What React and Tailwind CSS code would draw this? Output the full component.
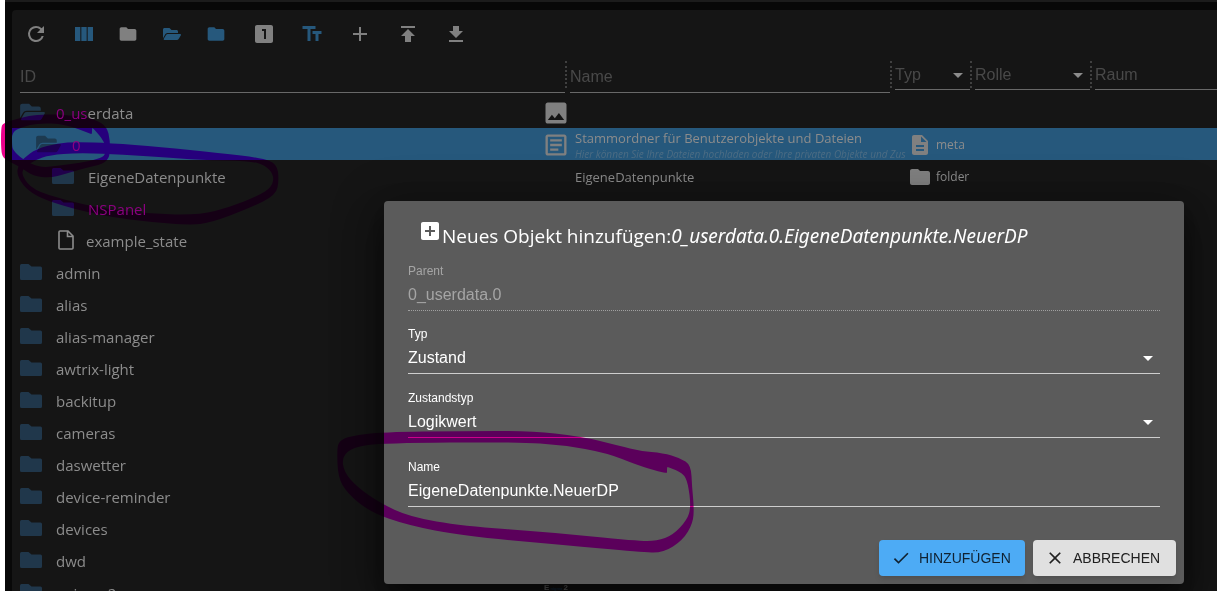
import { useState } from "react";

const ICONS = {
  refresh:
    "M17.65 6.35A7.958 7.958 0 0 0 12 4a8 8 0 1 0 7.73 10h-2.08A6 6 0 1 1 12 6c1.66 0 3.14.69 4.22 1.78L13 11h7V4l-2.35 2.35z",
  columns: "M14.67 5v14H9.33V5h5.34zm1 14H21V5h-5.33v14zm-7.34 0V5H3v14h5.33z",
  folder: "M10 4H4c-1.1 0-1.99.9-1.99 2L2 18c0 1.1.9 2 2 2h16c1.1 0 2-.9 2-2V8c0-1.1-.9-2-2-2h-8l-2-2z",
  one: "M19 3H5c-1.1 0-2 .9-2 2v14c0 1.1.9 2 2 2h14c1.1 0 2-.9 2-2V5c0-1.1-.9-2-2-2zm-5 14h-2V9h-2V7h4v10z",
  text: "M2.5 4v3h5v12h3V7h5V4h-13zm19 5h-9v3h3v7h3v-7h3V9z",
  add: "M19 13h-6v6h-2v-6H5v-2h6V5h2v6h6v2z",
  upload: "M5 4v2h14V4H5zm0 10h4v6h6v-6h4l-7-7-7 7z",
  download: "M19 9h-4V4H9v5H5l7 7 7-7zM5 18v2h14v-2H5z",
  image:
    "M21 19V5c0-1.1-.9-2-2-2H5c-1.1 0-2 .9-2 2v14c0 1.1.9 2 2 2h14c1.1 0 2-.9 2-2zM8.5 13.5l2.5 3.01L14.5 12l4.5 6H5l3.5-4.5z",
  article:
    "M19 5v14H5V5h14m0-2H5c-1.1 0-2 .9-2 2v14c0 1.1.9 2 2 2h14c1.1 0 2-.9 2-2V5c0-1.1-.9-2-2-2zM14 17H7v-2h7v2zm3-4H7v-2h10v2zm0-4H7V7h10v2z",
  doc: "M14 2H6c-1.1 0-2 .9-2 2v16c0 1.1.9 2 2 2h12c1.1 0 2-.9 2-2V8l-6-6zm2 16H8v-2h8v2zm0-4H8v-2h8v2zm-3-5V3.5L18.5 9H13z",
  addBox: "M19 3H5c-1.11 0-2 .9-2 2v14c0 1.1.89 2 2 2h14c1.1 0 2-.9 2-2V5c0-1.1-.9-2-2-2zm-2 10h-4v4h-2v-4H7v-2h4V7h2v4h4v2z",
  check: "M9 16.17 4.83 12l-1.42 1.41L9 19 21 7l-1.41-1.41z",
  close: "M19 6.41 17.59 5 12 10.59 6.41 5 5 6.41 10.59 12 5 17.59 6.41 19 12 13.41 17.59 19 19 17.59 13.41 12z",
};

function Icon({ name, className = "size-6" }) {
  return (
    <svg viewBox="0 0 24 24" fill="currentColor" className={`shrink-0 ${className}`} aria-hidden="true">
      <path d={ICONS[name]} />
    </svg>
  );
}

function OpenFolder({ className }) {
  return (
    <svg viewBox="0 0 576 512" fill="currentColor" className={`shrink-0 ${className}`} aria-hidden="true">
      <path d="M572.7 292.1 500.3 416.2A64 64 0 0 1 445 448H45c-18.5 0-30.1-20.1-20.7-36.1l72.4-124.1A64 64 0 0 1 152 256h400c18.5 0 30.1 20.1 20.7 36.1zM152 224h328v-48c0-26.5-21.5-48-48-48H272l-64-64H48C21.5 64 0 85.5 0 112v278l69.1-118.4C86.2 242.2 118 224 152 224z" />
    </svg>
  );
}

function TreeFolder() {
  return (
    <svg viewBox="0 0 22 16" fill="currentColor" className="h-4 w-[22px] shrink-0" aria-hidden="true">
      <path d="M1.5 0h7l3 2.500h9A1.5 1.5 0 0 1 22 4v10.500a1.5 1.5 0 0 1-1.5 1.500h-19A1.5 1.5 0 0 1 0 14.500v-13A1.5 1.5 0 0 1 1.500 0z" />
    </svg>
  );
}

function StateFile() {
  return (
    <svg viewBox="0 0 16 20" fill="none" stroke="currentColor" strokeWidth="1.6" className="h-5 w-4 shrink-0" aria-hidden="true">
      <path d="M2 1h8l5 5v12a1 1 0 0 1-1 1H2a1 1 0 0 1-1-1V2a1 1 0 0 1 1-1zM9.5 1v5.5H15" />
    </svg>
  );
}

function Caret({ className }) {
  return (
    <svg viewBox="0 0 10 5" fill="currentColor" className={`pointer-events-none absolute h-[5px] w-[10px] ${className}`} aria-hidden="true">
      <path d="M0 0h10L5 5z" />
    </svg>
  );
}

const TOOLS = [
  { label: "Aktualisieren", icon: "refresh", box: "w-12" },
  { label: "Spalten", icon: "columns", box: "w-12 text-[#26587c]" },
  { label: "Alle zuklappen", icon: "folder", box: "w-10", size: "size-5" },
  { label: "Alle aufklappen", box: "w-12 text-[#26587c]" },
  { label: "Eine Ebene zuklappen", icon: "folder", box: "w-10 text-[#26587c]", size: "size-5" },
  { label: "Eine Ebene", icon: "one", box: "w-14" },
  { label: "Namen anzeigen", icon: "text", box: "w-10 text-[#26587c]" },
  { label: "Objekt hinzufügen", icon: "add", box: "w-14" },
  { label: "Objekte hochladen", icon: "upload", box: "w-10" },
  { label: "Objekte herunterladen", icon: "download", box: "w-14" },
];

function Toolbar() {
  return (
    <div className="flex h-12 items-center text-[#808080]">
      {TOOLS.map((t) => (
        <button key={t.label} type="button" aria-label={t.label} className={`flex h-10 items-center justify-center ${t.box}`}>
          {t.icon ? <Icon name={t.icon} className={t.size} /> : <OpenFolder className="h-4 w-[18px]" />}
        </button>
      ))}
    </div>
  );
}

function FilterText({ label, className }) {
  return (
    <input
      type="text"
      aria-label={label}
      placeholder={label}
      className={`h-8 min-w-0 border-b border-[#686868] bg-transparent placeholder:text-[#494949] focus:outline-none ${className}`}
    />
  );
}

function FilterSelect({ label, className }) {
  return (
    <div className={`relative shrink-0 ${className}`}>
      <select aria-label={label} className="h-[29px] w-full appearance-none border-b border-[#686868] bg-transparent text-[#494949] focus:outline-none">
        <option>{label}</option>
      </select>
      <Caret className="top-3 right-[7px] text-[#8c8c8c]" />
    </div>
  );
}

function Divider() {
  return <div className="h-[27px] w-[5px] shrink-0 border-l-2 border-dotted border-[#404040]" />;
}

function Filters() {
  return (
    <div className="flex h-[38px] items-start overflow-hidden pt-[3px] pl-2 font-['Liberation_Sans',Arial,sans-serif] text-base">
      <FilterText label="ID" className="w-[545px] shrink-0" />
      <Divider />
      <FilterText label="Name" className="w-[320px] shrink-0" />
      <Divider />
      <FilterSelect label="Typ" className="w-[75px]" />
      <Divider />
      <FilterSelect label="Rolle" className="w-[115px]" />
      <Divider />
      <FilterSelect label="Raum" className="w-[175px]" />
    </div>
  );
}

const ROWS = [
  { id: "0_userdata", marked: "0_us", rest: "erdata", icon: "open", pad: "pl-2", badge: "image" },
  {
    id: "0",
    marked: "0",
    icon: "open",
    pad: "pl-6",
    selected: true,
    badge: "article",
    name: "Stammordner für Benutzerobjekte und Dateien",
    desc: "Hier können Sie Ihre Dateien hochladen oder Ihre privaten Objekte und Zus",
    type: "meta",
    typeIcon: "doc",
  },
  { id: "EigeneDatenpunkte", icon: "closed", pad: "pl-10", name: "EigeneDatenpunkte", type: "folder", typeIcon: "folder" },
  { id: "NSPanel", marked: "NSPanel", icon: "closed", pad: "pl-10" },
  { id: "example_state", icon: "state", pad: "pl-[46px]" },
  { id: "admin" },
  { id: "alias" },
  { id: "alias-manager" },
  { id: "awtrix-light" },
  { id: "backitup" },
  { id: "cameras" },
  { id: "daswetter" },
  { id: "device-reminder" },
  { id: "devices" },
  { id: "dwd" },
  { id: "enigma2", badge: "enigma" },
];

function RowIcon({ kind, selected }) {
  if (kind === "state") {
    return (
      <span className="w-7 pb-0.5 text-[#8c8c8c]">
        <StateFile />
      </span>
    );
  }
  return (
    <span className={`w-9 pb-0.5 ${selected ? "text-[#1d3a50]" : "text-[#20374b]"}`}>
      {kind === "open" ? <OpenFolder className="h-[22px] w-[25px]" /> : <TreeFolder />}
    </span>
  );
}

function Badge({ kind }) {
  if (!kind) return null;
  if (kind === "enigma") {
    return (
      <span className="flex w-7 items-baseline justify-between self-start px-0.5 font-['Liberation_Sans',Arial,sans-serif] text-[8px] leading-5 font-bold text-[#707070]">
        E<span className="text-[4px] text-[#16324a]">nigma</span>2
      </span>
    );
  }
  return <Icon name={kind} className="size-7 text-[#808080]" />;
}

function ObjectTable() {
  return (
    <table className="w-full table-fixed text-left text-[#8c8c8c]">
      <colgroup>
        <col className="w-[558px]" />
        <col className="w-[338px]" />
        <col />
      </colgroup>
      <tbody>
        {ROWS.map((r) => (
          <tr key={r.id} className={`h-8 ${r.selected ? "bg-[#26587c]" : ""}`}>
            <td className={`p-0 ${r.pad || "pl-2"}`}>
              <div className="flex h-8 items-center pt-0.5">
                <RowIcon kind={r.icon} selected={r.selected} />
                <span className="flex-1 text-[15px] leading-6">
                  {r.marked && <span className="text-[#8c0080]">{r.marked}</span>}
                  {r.marked ? r.rest : r.id}
                </span>
                <Badge kind={r.badge} />
              </div>
            </td>
            <td className="p-0 pl-[5px]">
              <div className={`flex h-8 flex-col justify-center overflow-hidden text-[13px] leading-5 whitespace-nowrap ${r.desc ? "" : "pt-0.5"}`}>
                <span>{r.name}</span>
                {r.desc && <span className="text-[10px] leading-3 text-[#4d6d84] italic">{r.desc}</span>}
              </div>
            </td>
            <td className="p-0">
              {r.type && (
                <div className="flex h-8 items-center gap-1 pt-0.5 text-xs">
                  <Icon name={r.typeIcon} className="size-6 text-[#808080]" />
                  {r.type}
                </div>
              )}
            </td>
          </tr>
        ))}
      </tbody>
    </table>
  );
}

function Field({ id, label, children, disabled }) {
  return (
    <div className={`relative flex flex-col ${disabled ? "text-[#a5a5a5]" : "text-white"}`}>
      <label htmlFor={id} className="text-xs leading-4">
        {label}
      </label>
      {children}
    </div>
  );
}

const FIELD = "h-8 w-full appearance-none border-b bg-transparent text-base focus:outline-none";

function AddDialog() {
  const [name, setName] = useState("EigeneDatenpunkte.NeuerDP");

  return (
    <div className="absolute inset-0 flex items-end justify-end pr-[33px] pb-[7px]">
      <div
        role="dialog"
        aria-labelledby="dialog-title"
        className="w-[800px] rounded bg-[#5b5b5b] shadow-[0_11px_15px_-7px_rgba(0,0,0,0.4),0_24px_38px_3px_rgba(0,0,0,0.3),0_9px_46px_8px_rgba(0,0,0,0.3)]"
      >
        <h2 id="dialog-title" className="flex h-[62px] items-start pt-[18px] pl-[34px] text-[19px] leading-[34px] text-white">
          <Icon name="addBox" />
          <span>
            Neues Objekt hinzufügen:<i className="font-['Noto_Sans',sans-serif]">0_userdata.0.EigeneDatenpunkte.NeuerDP</i>
          </span>
        </h2>
        <form className="flex flex-col px-6 font-['Liberation_Sans',Arial,sans-serif]" onSubmit={(e) => e.preventDefault()}>
          <Field id="parent" label="Parent" disabled>
            <input id="parent" disabled defaultValue="0_userdata.0" className={`${FIELD} border-dotted border-[#a0a0a0]`} />
          </Field>
          <div className="mt-[15px]">
            <Field id="typ" label="Typ">
              <select id="typ" className={`${FIELD} border-[#cecece]`}>
                <option>Zustand</option>
              </select>
              <Caret className="right-[7px] bottom-[13px]" />
            </Field>
          </div>
          <div className="mt-4">
            <Field id="zustandstyp" label="Zustandstyp">
              <select id="zustandstyp" className={`${FIELD} border-[#cecece]`}>
                <option>Logikwert</option>
              </select>
              <Caret className="right-[7px] bottom-[13px]" />
            </Field>
          </div>
          <div className="mt-[21px]">
            <Field id="name" label="Name">
              <input id="name" value={name} onChange={(e) => setName(e.target.value)} className={`${FIELD} border-[#cecece]`} />
            </Field>
          </div>
        </form>
        <div className="mt-[33px] flex justify-end gap-2 p-2 pt-0 font-['Liberation_Sans',Arial,sans-serif] text-sm">
          <button type="button" className="flex h-9 w-[146px] items-center gap-2 rounded bg-[#4dabf5] pl-3 text-[#102231] shadow-md">
            <Icon name="check" className="size-5" />
            HINZUFÜGEN
          </button>
          <button type="button" className="flex h-9 w-[143px] items-center gap-2 rounded bg-[#e0e0e0] pl-3 text-[#202020] shadow-md">
            <Icon name="close" className="size-5" />
            ABBRECHEN
          </button>
        </div>
      </div>
    </div>
  );
}

// closed curve through the midpoints of the given points
function loop(points) {
  const mid = (a, b) => `${(a[0] + b[0]) / 2} ${(a[1] + b[1]) / 2}`;
  const last = points[points.length - 1];
  const curves = points.map((p, i) => `Q${p[0]} ${p[1]} ${mid(p, points[(i + 1) % points.length])}`);
  return `M${mid(last, points[0])}${curves.join("")}Z`;
}

// outer edge and inner edge of every pen stroke
const STROKES = [
  [
    [[1, 128], [3, 123], [20, 118], [38, 114], [70, 115], [95, 119], [107, 127], [110, 140], [110, 157], [103, 164], [85, 168], [65, 174], [50, 178], [33, 176], [22, 168], [12, 163], [3, 158], [1, 150]],
    [[12, 145], [12, 132], [22, 127], [38, 123], [65, 124], [91, 134], [92, 134], [92, 128], [93, 128], [105, 142], [106, 155], [98, 159], [80, 163], [62, 165], [40, 168], [22, 159], [13, 150]],
  ],
  [
    [[17, 175], [18, 165], [24, 158], [36, 149], [58, 143], [77, 142], [110, 143], [160, 147], [220, 153], [262, 158], [277, 164], [279, 180], [276, 195], [250, 208], [210, 223], [190, 225], [150, 222], [110, 217], [70, 208], [40, 198], [25, 188]],
    [[22, 176], [33, 190], [65, 200], [100, 208], [150, 214], [200, 215], [230, 207], [258, 196], [272, 187], [274, 175], [265, 165], [250, 161], [200, 160], [160, 157], [110, 154], [77, 153], [50, 155], [35, 160], [23, 168]],
  ],
  [
    [[337, 450], [339, 441], [350, 436], [383, 432], [463, 431], [530, 431], [580, 436], [620, 446], [640, 451], [663, 453], [680, 458], [691, 465], [692, 487], [694, 507], [693, 523], [683, 540], [663, 553], [640, 552], [563, 545], [463, 536], [407, 525], [370, 512], [347, 493], [338, 477]],
    [[342, 457], [353, 447], [383, 443], [517, 442], [563, 445], [607, 453], [637, 465], [660, 472], [667, 473], [667, 472], [667, 467], [668, 467], [683, 473], [688, 483], [691, 507], [687, 520], [673, 535], [657, 541], [637, 541], [547, 532], [463, 526], [410, 517], [380, 503], [357, 487], [344, 472]],
  ],
];

function PenMarks() {
  return (
    <svg className="pointer-events-none absolute top-0 left-0 h-[591px] w-[1217px] mix-blend-darken" fill="#ec008c" fillRule="evenodd" aria-hidden="true">
      {STROKES.map(([outer, inner], i) => (
        <path key={i} d={loop(outer) + loop(inner)} />
      ))}
    </svg>
  );
}

export default function App() {
  return (
    <div className="relative isolate h-screen overflow-hidden bg-white pl-[5px] font-['Open_Sans','Segoe_UI',sans-serif]">
      <div className="h-full border-t-2 border-[#1c1c1c] bg-[#080808] pt-2 pl-[7px]">
        <main className="h-full rounded-tl bg-[#151515]">
          <Toolbar />
          <Filters />
          <ObjectTable />
        </main>
      </div>
      <AddDialog />
      <PenMarks />
    </div>
  );
}
